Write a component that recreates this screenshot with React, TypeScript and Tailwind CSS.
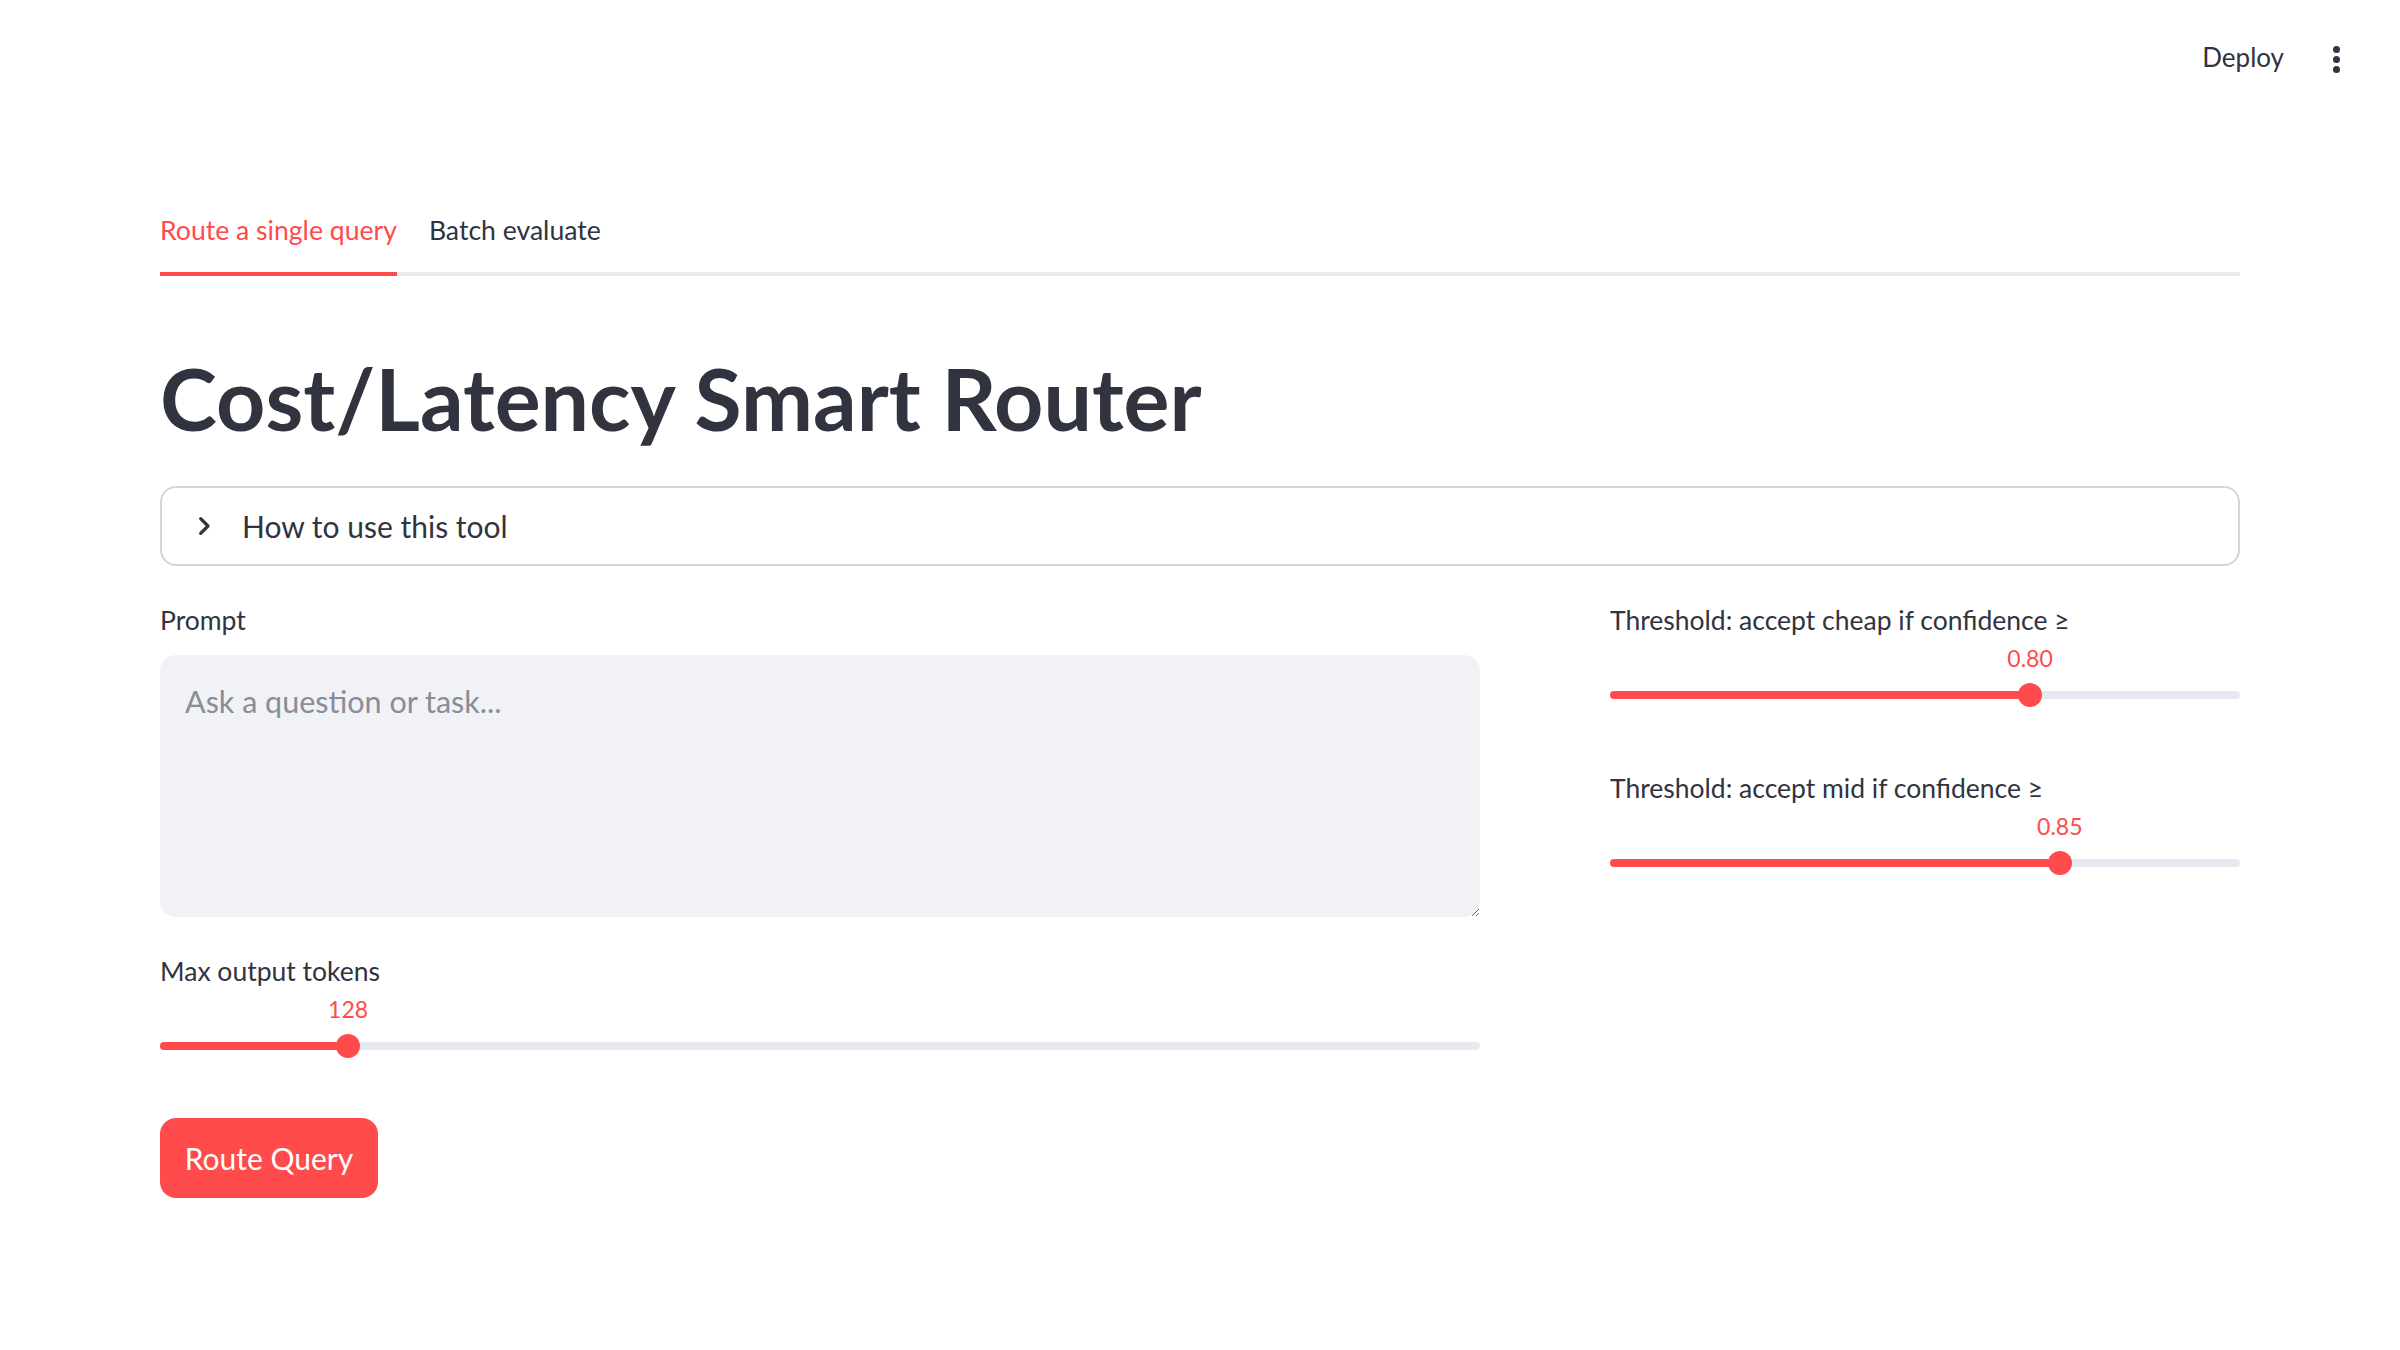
import { useState } from 'react'

const TABS = ['Route a single query', 'Batch evaluate']

function Slider({ label, value, frac }: { label: string; value: string; frac: number }) {
  const pct = `${frac * 100}%`
  return (
    <div>
      <div className="h-[40px] text-[26.5px] leading-[40px]">{label}</div>
      <div className="relative h-[36px]">
        <span className="absolute top-0 -translate-x-1/2 text-[23px] leading-[36px] text-[#ff4b4b]" style={{ left: pct }}>
          {value}
        </span>
      </div>
      <div className="relative flex h-[37px] items-center">
        <div className="h-[8px] w-full rounded-full bg-[#e6e9ef]" />
        <div className="absolute left-0 h-[8px] rounded-full bg-[#ff4b4b]" style={{ width: pct }} />
        <div className="absolute h-[24px] w-[24px] -translate-x-1/2 rounded-full bg-[#ff4b4b]" style={{ left: pct }} />
      </div>
    </div>
  )
}

export default function App() {
  const [tab, setTab] = useState(0)
  const [prompt, setPrompt] = useState('')

  return (
    <div className="min-h-screen bg-white font-['Lato','Noto_Sans',sans-serif] text-[#31333f]">
      <header className="flex h-[120px] items-start justify-end pr-[60px] pt-[37px]">
        <button className="h-[40px] text-[26px] leading-[40px] text-[#31333f]">Deploy</button>
        <div className="ml-[49px] mt-[9px] flex flex-col gap-[3px]">
          <span className="h-[7px] w-[7px] rounded-full bg-[#31333f]" />
          <span className="h-[7px] w-[7px] rounded-full bg-[#31333f]" />
          <span className="h-[7px] w-[7px] rounded-full bg-[#31333f]" />
        </div>
      </header>

      <main className="px-[160px] pt-[76px]">
        <div className="flex gap-[32px] border-b-[4px] border-[#eaebed]">
          {TABS.map((t, i) => (
            <button
              key={t}
              onClick={() => setTab(i)}
              className={`-mb-[4px] flex h-[80px] items-start border-b-[4px] pt-[14px] text-[26.6px] leading-[40px] ${
                tab === i ? 'border-[#ff4b4b] text-[#ff4b4b]' : 'border-transparent text-[#31333f]'
              }`}
            >
              {t}
            </button>
          ))}
        </div>

        <h1 className="mt-[70px] text-[86px] font-bold leading-[103px]">Cost/Latency Smart Router</h1>

        <div className="mt-[37px] flex h-[80px] items-center rounded-[16px] border-2 border-[#d6d6d9] pl-[26px]">
          <svg viewBox="0 0 24 24" className="h-[32px] w-[32px]" fill="none" stroke="#31333f" strokeWidth="2.4" strokeLinecap="round" strokeLinejoin="round">
            <polyline points="9.5,6.5 15,12 9.5,17.5" />
          </svg>
          <span className="ml-[22px] text-[30px] leading-[44px]">How to use this tool</span>
        </div>

        <div className="mt-[34px] flex gap-[130px]">
          <div className="w-[1320px]">
            <div className="h-[40px] text-[26.5px] leading-[40px]">Prompt</div>
            <textarea
              value={prompt}
              onChange={e => setPrompt(e.target.value)}
              placeholder="Ask a question or task..."
              className="mt-[15px] block h-[262px] w-full rounded-[16px] bg-[#f0f2f6] px-[25px] pt-[25px] text-[30.5px] leading-[42px] text-[#31333f] outline-none placeholder:text-[#8a8c96]"
            />
            <div className="mt-[34px]">
              <Slider label="Max output tokens" value="128" frac={0.1425} />
            </div>
            <button className="mt-[54px] h-[80px] w-[218px] rounded-[16px] bg-[#ff4b4b] text-[30px] text-white">
              Route Query
            </button>
          </div>
          <div className="flex-1">
            <Slider label="Threshold: accept cheap if confidence ≥" value="0.80" frac={0.6667} />
            <div className="mt-[55px]">
              <Slider label="Threshold: accept mid if confidence ≥" value="0.85" frac={0.714} />
            </div>
          </div>
        </div>
      </main>
    </div>
  )
}
